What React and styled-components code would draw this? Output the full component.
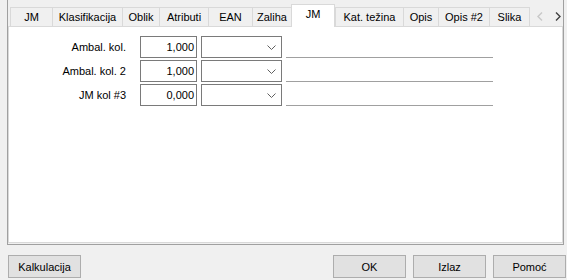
import React from 'react';
import styled, {createGlobalStyle} from 'styled-components';

const GlobalStyle = createGlobalStyle`
  html, body {
    margin: 0;
    padding: 0;
    background: #f0f0f0;
  }
  body {
    font-family: "Liberation Sans", Arial, sans-serif;
    font-size: 11px;
    color: #000;
  }
`;

const Window = styled.div`
  width: 567px;
  height: 280px;
  display: flex;
  flex-direction: column;
  box-sizing: border-box;
`;

const Frame = styled.div`
  margin: 0 3px 0 7px;
  height: 245px;
  box-sizing: border-box;
  border: 1px solid #a0a0a0;
  border-top: none;
  display: flex;
  flex-direction: column;
  padding: 4px 0 1px 0;
`;

const TabStrip = styled.div`
  display: flex;
  align-items: flex-end;
  height: 22px;
  padding-left: 2px;
  position: relative;
  z-index: 1;
`;

const Tab = styled.div`
  box-sizing: border-box;
  width: ${p => p.$w}px;
  height: ${p => (p.$active ? 23 : 19)}px;
  margin-bottom: ${p => (p.$active ? -1 : 0)}px;
  display: flex;
  align-items: center;
  justify-content: center;
  padding-bottom: ${p => (p.$active ? 4 : 0)}px;
  background: ${p => (p.$active ? '#fff' : '#f0f0f0')};
  border-top: 1px solid #d9d9d9;
  border-left: 1px solid #d9d9d9;
  border-right: ${p => (p.$active || p.$last ? '1px solid #d9d9d9' : 'none')};
  white-space: nowrap;
`;

const Scroller = styled.div`
  flex: 1;
  height: 20px;
  display: flex;
  align-items: center;
  justify-content: flex-end;
  gap: 12px;
  padding-right: 2px;
`;

const Page = styled.div`
  flex: 1;
  background: #fff;
  border: 1px solid #d9d9d9;
  padding-top: 9px;
`;

const Form = styled.div`
  display: grid;
  grid-template-columns: 127px 57px 81px 207px;
  grid-auto-rows: 22px;
  row-gap: 2px;
  column-gap: 4px;
  align-items: stretch;
`;

const Label = styled.div`
  display: flex;
  align-items: center;
  justify-content: flex-end;
  margin-right: 10px;
`;

const NumInput = styled.div`
  box-sizing: border-box;
  border: 1px solid #7a7a7a;
  background: #fff;
  display: flex;
  align-items: center;
  justify-content: flex-end;
  padding-right: 2px;
`;

const Combo = styled.div`
  box-sizing: border-box;
  border: 1px solid #7a7a7a;
  background: #fff;
  display: flex;
  align-items: center;
  justify-content: flex-end;
  padding-right: 5px;
`;

const Underline = styled.div`
  box-sizing: border-box;
  border-bottom: 1px solid #a0a0a0;
`;

const ButtonRow = styled.div`
  display: flex;
  gap: 7px;
  margin: 10px 1px 0 8px;
`;

const Spacer = styled.div`
  flex: 1;
`;

const Button = styled.div`
  box-sizing: border-box;
  width: 73px;
  height: 23px;
  background: #e1e1e1;
  border: 1px solid #adadad;
  display: flex;
  align-items: center;
  justify-content: center;
`;

const Chevron = ({dir = 'down', color = '#606060'}) => {
  if (dir === 'down') {
    return (
      <svg width="9" height="5" viewBox="0 0 9 5">
        <path d="M0.5 0.5 L4.5 4.5 L8.5 0.5" fill="none" stroke={color} strokeWidth="1" />
      </svg>
    );
  }
  const d = dir === 'left' ? 'M5 0.5 L1 4.5 L5 8.5' : 'M1 0.5 L5 4.5 L1 8.5';
  return (
    <svg width="6" height="9" viewBox="0 0 6 9">
      <path d={d} fill="none" stroke={color} strokeWidth="1.4" />
    </svg>
  );
};

const tabs = [
  {label: 'JM', w: 42},
  {label: 'Klasifikacija', w: 70},
  {label: 'Oblik', w: 37},
  {label: 'Atributi', w: 49},
  {label: 'EAN', w: 44},
  {label: 'Zaliha', w: 39},
  {label: 'JM', w: 44, active: true},
  {label: 'Kat. težina', w: 68},
  {label: 'Opis', w: 35},
  {label: 'Opis #2', w: 51},
  {label: 'Slika', w: 41, last: true},
];

const rows = [
  {label: 'Ambal. kol.', value: '1,000'},
  {label: 'Ambal. kol. 2', value: '1,000'},
  {label: 'JM kol #3', value: '0,000'},
];

const App = () => {
  return (
    <Window>
      <GlobalStyle />
      <Frame>
        <TabStrip>
          {tabs.map((t, i) => (
            <Tab key={i} $w={t.w} $active={t.active} $last={t.last}>{t.label}</Tab>
          ))}
          <Scroller>
            <Chevron dir="left" color="#c8c8c8" />
            <Chevron dir="right" color="#404040" />
          </Scroller>
        </TabStrip>
        <Page>
          <Form>
            {rows.map((r, i) => (
              <React.Fragment key={i}>
                <Label>{r.label}</Label>
                <NumInput>{r.value}</NumInput>
                <Combo><Chevron /></Combo>
                <Underline />
              </React.Fragment>
            ))}
          </Form>
        </Page>
      </Frame>
      <ButtonRow>
        <Button>Kalkulacija</Button>
        <Spacer />
        <Button>OK</Button>
        <Button>Izlaz</Button>
        <Button>Pomoć</Button>
      </ButtonRow>
    </Window>
  );
};

export default App;
